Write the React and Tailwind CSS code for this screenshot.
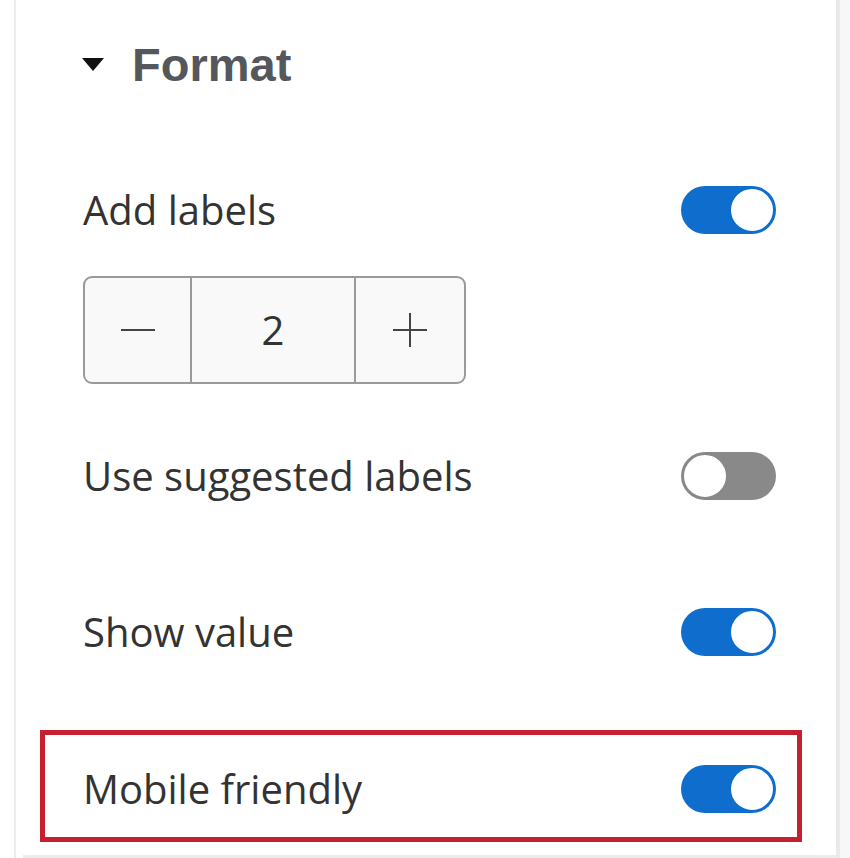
function Toggle({ on }) {
  return (
    <div
      className={
        "flex h-[48px] w-[95px] items-center rounded-full p-[1px] " +
        (on ? "justify-end bg-[#0f6ecd]" : "justify-start bg-[#898989]")
      }
    >
      <div
        className={
          "h-[46px] w-[46px] rounded-full border-2 bg-white " +
          (on ? "border-[#0f6ecd]" : "border-[#898989]")
        }
      />
    </div>
  );
}

function Row({ label, on }) {
  return (
    <div className="flex h-[48px] items-center justify-between">
      <span className="text-[40px] leading-none text-[#333333]">{label}</span>
      <Toggle on={on} />
    </div>
  );
}

export default function App() {
  return (
    <div
      className="flex h-[858px] w-[850px] bg-[#f7f7f7]"
      style={{ fontFamily: '"Open Sans", "Liberation Sans", sans-serif' }}
    >
      <div className="flex w-[840px] bg-white pl-[14px]">
        <div className="flex flex-1 flex-col border-l-2 border-[#ececec]">
          <div className="ml-[66px] flex h-[128px] items-center gap-[28px]">
            <svg width="22" height="13" viewBox="0 0 22 13">
              <path d="M0 0 H22 L11 13 Z" fill="#111" />
            </svg>
            <h2
              className="text-[47px] font-bold leading-none text-[#54575b]"
              style={{ fontFamily: '"Liberation Sans", Arial, sans-serif' }}
            >
              Format
            </h2>
          </div>

          <div className="ml-[67px] mt-[58px] w-[693px]">
            <Row label="Add labels" on />
          </div>

          <div className="ml-[67px] mt-[42px] grid h-[108px] w-[383px] grid-cols-[107px_164px_1fr] rounded-[9px] border-2 border-[#9a9a9a] bg-[#f9f9f9]">
            <div className="flex items-center justify-center border-r-2 border-[#9a9a9a]">
              <div className="h-[2px] w-[34px] bg-[#444]" />
            </div>
            <div className="flex items-center justify-center border-r-2 border-[#9a9a9a] text-[40px] text-[#333]">
              2
            </div>
            <div className="flex items-center justify-center">
              <svg width="34" height="34" viewBox="0 0 34 34">
                <path d="M0 17 H34 M17 0 V34" stroke="#444" strokeWidth="2" />
              </svg>
            </div>
          </div>

          <div className="ml-[67px] mt-[68px] w-[693px]">
            <Row label="Use suggested labels" on={false} />
          </div>

          <div className="ml-[67px] mt-[108px] w-[693px]">
            <Row label="Show value" on />
          </div>

          <div className="ml-[24px] mt-[74px] flex h-[112px] w-[762px] items-center border-[5px] border-[#c4202f] pl-[38px] pr-[21px] pt-[6px]">
            <div className="flex-1">
              <Row label="Mobile friendly" on />
            </div>
          </div>

          <div className="ml-[7px] mt-[13px] h-[3px] bg-[#ececec]" />
        </div>
        <div className="w-[4px] bg-[#e9e9e9]" />
      </div>
    </div>
  );
}
